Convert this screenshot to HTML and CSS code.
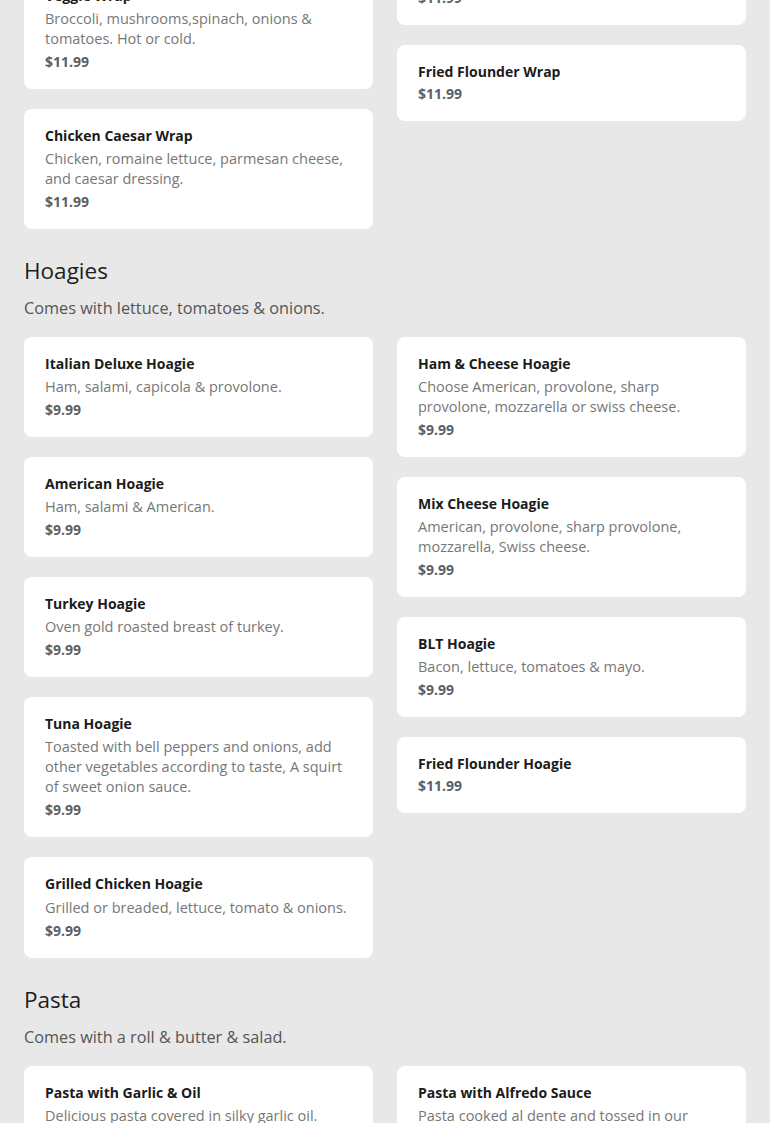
FILE: index.html
```html
<!DOCTYPE html>
<html lang="en">
<head>
<meta charset="utf-8">
<title>Menu</title>
<link rel="stylesheet" href="styles.css">
</head>
<body>
<main class="menu">
  <section class="section section-first">
    <div class="columns">
      <div class="col">
        <div class="card">
          <div class="name">Grilled Chicken Wrap</div>
          <div class="desc">Grilled chicken, lettuce, tomatoes, onions and cheese.</div>
          <div class="price">$11.99</div>
        </div>
        <div class="card">
          <div class="name">Veggie Wrap</div>
          <div class="desc">Broccoli, mushrooms,spinach, onions &amp; tomatoes. Hot or cold.</div>
          <div class="price">$11.99</div>
        </div>
        <div class="card">
          <div class="name">Chicken Caesar Wrap</div>
          <div class="desc">Chicken, romaine lettuce, parmesan cheese, and caesar dressing.</div>
          <div class="price">$11.99</div>
        </div>
      </div>
      <div class="col">
        <div class="card">
          <div class="name">Tuna Wrap</div>
          <div class="price">$11.99</div>
        </div>
        <div class="card">
          <div class="name">Turkey Wrap</div>
          <div class="desc">Turkey, lettuce, tomatoes &amp; mayo.</div>
          <div class="price">$11.99</div>
        </div>
        <div class="card">
          <div class="name">Fried Flounder Wrap</div>
          <div class="price">$11.99</div>
        </div>
      </div>
    </div>
  </section>

  <section class="section">
    <h2 class="title">Hoagies</h2>
    <p class="note">Comes with lettuce, tomatoes &amp; onions.</p>
    <div class="columns">
      <div class="col">
        <div class="card">
          <div class="name">Italian Deluxe Hoagie</div>
          <div class="desc">Ham, salami, capicola &amp; provolone.</div>
          <div class="price">$9.99</div>
        </div>
        <div class="card">
          <div class="name">American Hoagie</div>
          <div class="desc">Ham, salami &amp; American.</div>
          <div class="price">$9.99</div>
        </div>
        <div class="card">
          <div class="name">Turkey Hoagie</div>
          <div class="desc">Oven gold roasted breast of turkey.</div>
          <div class="price">$9.99</div>
        </div>
        <div class="card">
          <div class="name">Tuna Hoagie</div>
          <div class="desc">Toasted with bell peppers and onions, add other vegetables according to taste, A squirt of sweet onion sauce.</div>
          <div class="price">$9.99</div>
        </div>
        <div class="card card-tall">
          <div class="name">Grilled Chicken Hoagie</div>
          <div class="desc">Grilled or breaded, lettuce, tomato &amp; onions.</div>
          <div class="price">$9.99</div>
        </div>
      </div>
      <div class="col">
        <div class="card">
          <div class="name">Ham &amp; Cheese Hoagie</div>
          <div class="desc">Choose American, provolone, sharp provolone, mozzarella or swiss cheese.</div>
          <div class="price">$9.99</div>
        </div>
        <div class="card">
          <div class="name">Mix Cheese Hoagie</div>
          <div class="desc">American, provolone, sharp provolone, mozzarella, Swiss cheese.</div>
          <div class="price">$9.99</div>
        </div>
        <div class="card">
          <div class="name">BLT Hoagie</div>
          <div class="desc">Bacon, lettuce, tomatoes &amp; mayo.</div>
          <div class="price">$9.99</div>
        </div>
        <div class="card">
          <div class="name">Fried Flounder Hoagie</div>
          <div class="price">$11.99</div>
        </div>
      </div>
    </div>
  </section>

  <section class="section">
    <h2 class="title">Pasta</h2>
    <p class="note">Comes with a roll &amp; butter &amp; salad.</p>
    <div class="columns">
      <div class="col">
        <div class="card">
          <div class="name">Pasta with Garlic &amp; Oil</div>
          <div class="desc">Delicious pasta covered in silky garlic oil.</div>
          <div class="price">$11.99</div>
        </div>
      </div>
      <div class="col">
        <div class="card">
          <div class="name">Pasta with Alfredo Sauce</div>
          <div class="desc">Pasta cooked al dente and tossed in our creamy alfredo sauce.</div>
          <div class="price">$12.99</div>
        </div>
      </div>
    </div>
  </section>
</main>
</body>
</html>
```

FILE: styles.css
```css
html, body {
  margin: 0;
  padding: 0;
  background: #e8e8e8;
}

body {
  font-family: "Open Sans", "Liberation Sans", sans-serif;
  color: #1b1b1b;
}

.menu {
  padding: 0 24px 24px;
  margin-top: -171px;
}

.section {
  margin-top: 27px;
}

.section-first {
  margin-top: 0;
}

.title {
  margin: 0;
  font-size: 22.5px;
  font-weight: 400;
  line-height: 30px;
  color: #1e1e1e;
}

.note {
  margin: 10px 0 17px;
  font-size: 16.25px;
  line-height: 24px;
  color: #555555;
}

.columns {
  display: grid;
  grid-template-columns: 1fr 1fr;
  column-gap: 24px;
  align-items: start;
}

.col {
  display: flex;
  flex-direction: column;
  gap: 20px;
}

.card {
  background: #ffffff;
  border-radius: 8px;
  padding: 17px 21px 17px;
  display: flex;
  flex-direction: column;
}

.card-tall .desc {
  margin-top: 2px;
}

.name {
  font-size: 14px;
  font-weight: 700;
  line-height: 20px;
  color: #1b1b1b;
  margin-bottom: 2px;
}

.desc {
  font-size: 14.5px;
  line-height: 20px;
  color: #777777;
  margin: 1px 0 3px;
}

.price {
  font-size: 14px;
  font-weight: 700;
  line-height: 20px;
  color: #5b5f66;
}
```
